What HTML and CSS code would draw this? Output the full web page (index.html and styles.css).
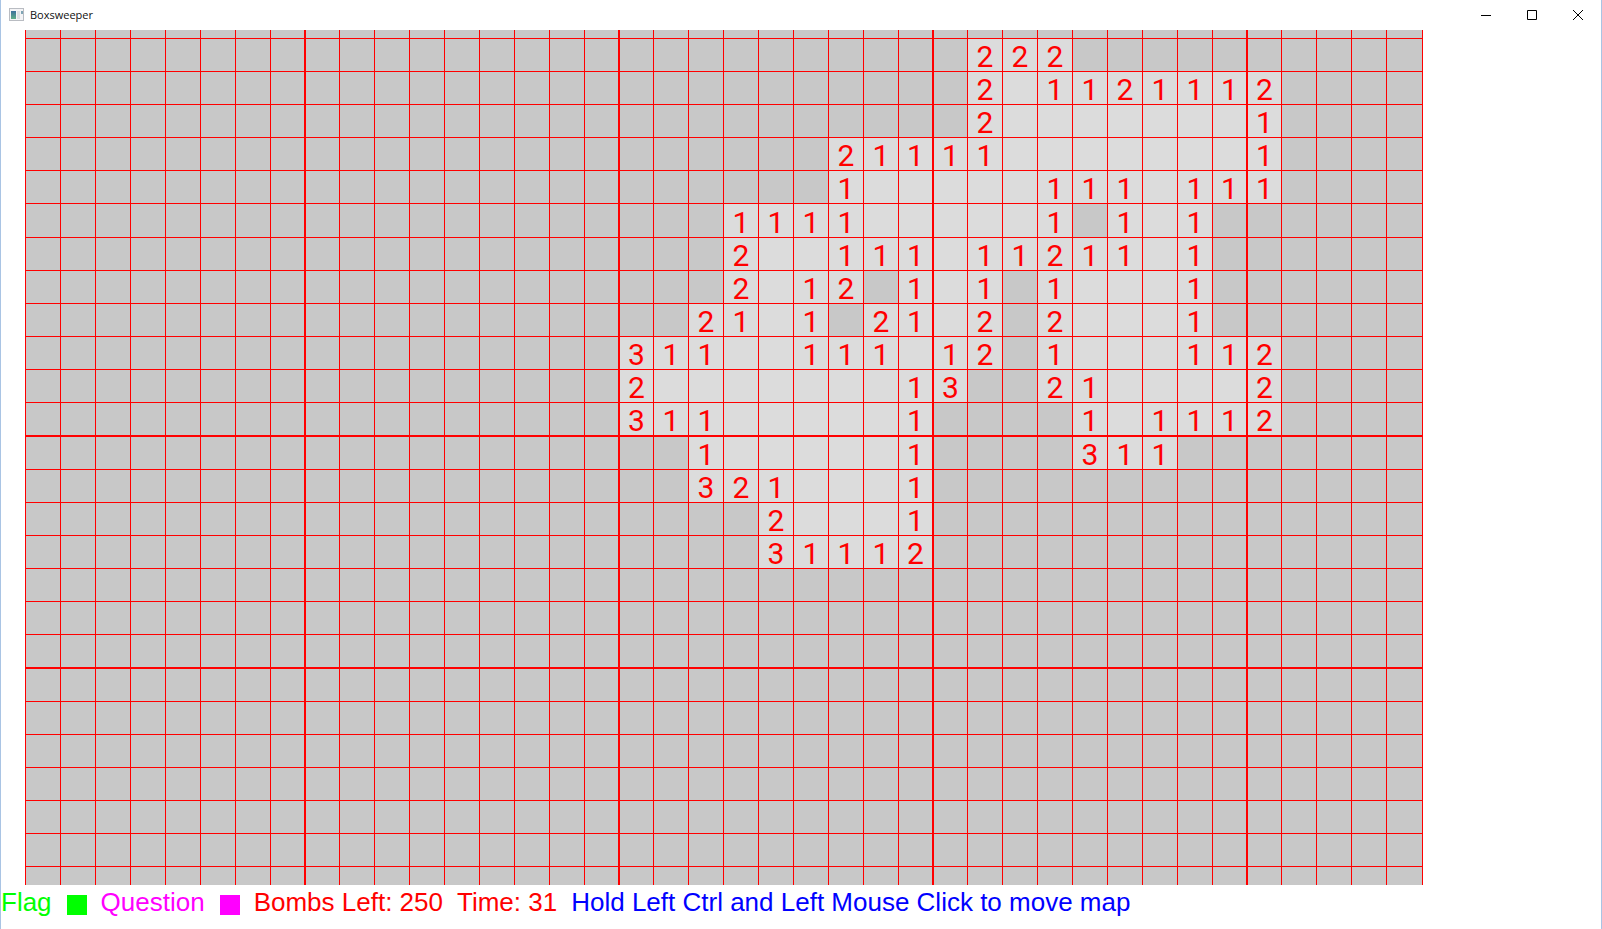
FILE: index.html
```html
<!DOCTYPE html>
<html lang="en">
<head>
<meta charset="utf-8">
<title>Boxsweeper</title>
<link rel="stylesheet" href="styles.css">
</head>
<body>
<div class="window">
  <header class="titlebar">
    <svg class="app-icon" viewBox="0 0 16 14" aria-hidden="true">
      <defs><linearGradient id="pane" x1="0" y1="0" x2="0" y2="1"><stop offset="0" stop-color="#3c6f9c"/><stop offset="1" stop-color="#5fae86"/></linearGradient></defs>
      <rect x=".5" y=".5" width="14" height="12" fill="#f4f4f6" stroke="#b9bcc2"/>
      <rect x="2" y="3" width="5" height="8" fill="url(#pane)"/>
      <rect x="8" y="3" width="3" height="8" fill="#dcdfe2"/>
      <rect x="12" y="3" width="2" height="3" fill="#7fa5b5"/>
    </svg>
    <h1 class="title">Boxsweeper</h1>
    <div class="controls">
      <button class="control" type="button" aria-label="Minimize"><svg viewBox="0 0 10 10"><path d="M0 5.5H10"/></svg></button>
      <button class="control" type="button" aria-label="Maximize"><svg viewBox="0 0 10 10"><path d="M.5 .5H9.5V9.5H.5Z"/></svg></button>
      <button class="control" type="button" aria-label="Close"><svg viewBox="0 0 10 10"><path d="M0 0L10 10M10 0L0 10"/></svg></button>
    </div>
  </header>
  <main class="board" id="board"></main>
  <footer class="status">
    <span class="item flag">Flag<i class="swatch"></i></span>
    <span class="item question">Question<i class="swatch"></i></span>
    <span class="item count">Bombs Left: 250</span>
    <span class="item count">Time: 31</span>
    <span class="item hint">Hold Left Ctrl and Left Mouse Click to move map</span>
  </footer>
</div>
<script src="board.js"></script>
</body>
</html>
```
FILE: styles.css
```css
* { box-sizing: border-box; }
body { margin: 0; background: #fff; }
.window {
  min-height: 100vh;
  display: flex;
  flex-direction: column;
  border: 0 solid #a9c4e4;
  border-width: 0 1px;
}
.titlebar {
  display: flex;
  align-items: center;
  height: 30px;
  padding-left: 8px;
  gap: 5px;
}
.app-icon { width: 16px; height: 14px; }
.title {
  margin: 0;
  font: 400 11px/16px "Open Sans", "Noto Sans", sans-serif;
  color: #111;
}
.controls { display: flex; margin-left: auto; }
.control {
  width: 46px;
  height: 29px;
  padding: 0;
  border: 0;
  background: none;
  display: grid;
  place-items: center;
}
.control svg { width: 10px; height: 10px; fill: none; stroke: #000; stroke-width: 1; }
.board {
  align-self: flex-start;
  margin-left: 24px;
  border-right: 1px solid #f00;
}
.row { display: flex; height: 33px; }
.row.tall { height: 34px; }
.row.first { height: 8px; overflow: hidden; }
.row.last { height: 19px; overflow: hidden; }
.cell {
  flex: none;
  width: 35px;
  padding: 4px 0 0;
  border: 0 solid #f00;
  border-width: 1px 0 0 1px;
  border-radius: 0;
  background: #c8c8c8;
  color: #f00;
  font: 400 30px/28px Roboto, "Liberation Sans", sans-serif;
  text-align: center;
}
.cell.open { background: #dcdcdc; }
.cell.narrow { width: 34px; }
.cell.wide { width: 36px; }
.cell.thick { border-left-width: 2px; }
.row.first .cell { border-top-width: 0; }
.row.heavy .cell { border-top-width: 2px; }
.status {
  display: flex;
  gap: 14px;
  font: 400 26px/34px "Liberation Sans", Arial, sans-serif;
}
.item { display: flex; align-items: center; white-space: nowrap; }
.swatch { width: 20px; height: 20px; margin: 6px 0 0 15px; background: currentColor; }
.flag { color: #0f0; }
.question { color: #f0f; }
.count { color: #f00; }
.hint { color: #00f; }
```
FILE: board.js
```js
// "#" is a covered box, "." an opened empty box, digits are neighbour counts.
const COLUMNS = 40;
const START = 17;
const rows = [
  "",
  "##########222",
  "##########2.1121112",
  "##########2.......1",
  "######21111.......1",
  "######1.....111.111",
  "###1111.....1#1.1",
  "###2..111.11211.1",
  "###2.12#1.1#1...1",
  "##21.1#21.2#2...1",
  "311..111.12#1...112",
  "2.......13##21....2",
  "311.....1####1.1112",
  "##1.....1####311",
  "##321...1",
  "####2...1",
  "####31112",
  "", "", "", "", "", "", "", "", "", ""
];
const board = document.getElementById("board");
rows.forEach((text, r) => {
  const row = document.createElement("div");
  row.className = "row";
  if (r === 0) row.classList.add("first");
  if (r === rows.length - 1) row.classList.add("last");
  if ([6, 13, 20].includes(r)) row.classList.add("tall");
  if ([13, 20].includes(r)) row.classList.add("heavy");
  for (let c = 0; c < COLUMNS; c++) {
    const mark = text[c - START] || "#";
    const cell = document.createElement("button");
    cell.type = "button";
    cell.className = "cell";
    if (mark !== "#") cell.classList.add("open");
    if (/\d/.test(mark)) cell.textContent = mark;
    else cell.setAttribute("aria-label", mark === "#" ? "Covered" : "Empty");
    if (c % 9 === 8) cell.classList.add("thick");
    if (c % 9 === 7) cell.classList.add("narrow");
    if (c === COLUMNS - 1) cell.classList.add("wide");
    row.append(cell);
  }
  board.append(row);
});
```
